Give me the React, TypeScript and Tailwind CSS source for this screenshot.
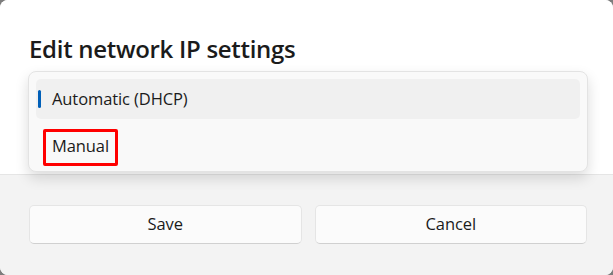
import React from "react";

export default function App() {
  const font = { fontFamily: '"Open Sans", "Noto Sans", sans-serif' };
  return (
    <div className="w-[613px] h-[275px] bg-[#7d7d7d] overflow-hidden" style={font}>
      <div className="h-full rounded-lg overflow-hidden flex flex-col bg-white text-[#1b1b1b]">
        <div className="h-[174px] shrink-0 bg-white pt-[33px]">
          <div className="pl-[29px] text-[24px] leading-[32px] font-semibold tracking-[-0.3px]">
            Edit network IP settings
          </div>
          <div className="relative z-10 mt-[6px] ml-[28px] w-[560px] h-[101px] rounded-[8px] border border-[#e3e3e3] bg-[#f9f9f9] shadow-[0_6px_14px_rgba(0,0,0,0.14)] px-[7px] pt-[7px] flex flex-col gap-[7px]">
            <div className="relative h-[40px] rounded-[5px] bg-[#f0f0f0] flex items-center pl-[16px] text-[16.5px] tracking-[-0.1px]">
              <span className="absolute left-[2px] top-[11px] h-[18px] w-[3px] rounded-full bg-[#005fb8]" />
              Automatic (DHCP)
            </div>
            <div className="relative h-[40px] rounded-[5px] flex items-center pl-[16px] text-[16.5px] tracking-[-0.1px]">
              <span className="absolute left-[7px] top-[3px] w-[75px] h-[37px] border-[3px] border-[#ff0000] rounded-[2px]" />
              Manual
            </div>
          </div>
        </div>
        <div className="flex-1 bg-[#f3f3f3] border-t border-[#e5e5e5] pl-[29px] pr-[26px] pt-[30px] flex gap-[13px]">
          <button className="flex-1 h-[39px] rounded-[5px] bg-[#fbfbfb] border border-[#e5e5e5] border-b-[#d0d0d0] text-[16.5px] tracking-[-0.1px] text-[#1b1b1b]">
            Save
          </button>
          <button className="flex-1 h-[39px] rounded-[5px] bg-[#fbfbfb] border border-[#e5e5e5] border-b-[#d0d0d0] text-[16.5px] tracking-[-0.1px] text-[#1b1b1b]">
            Cancel
          </button>
        </div>
      </div>
    </div>
  );
}
